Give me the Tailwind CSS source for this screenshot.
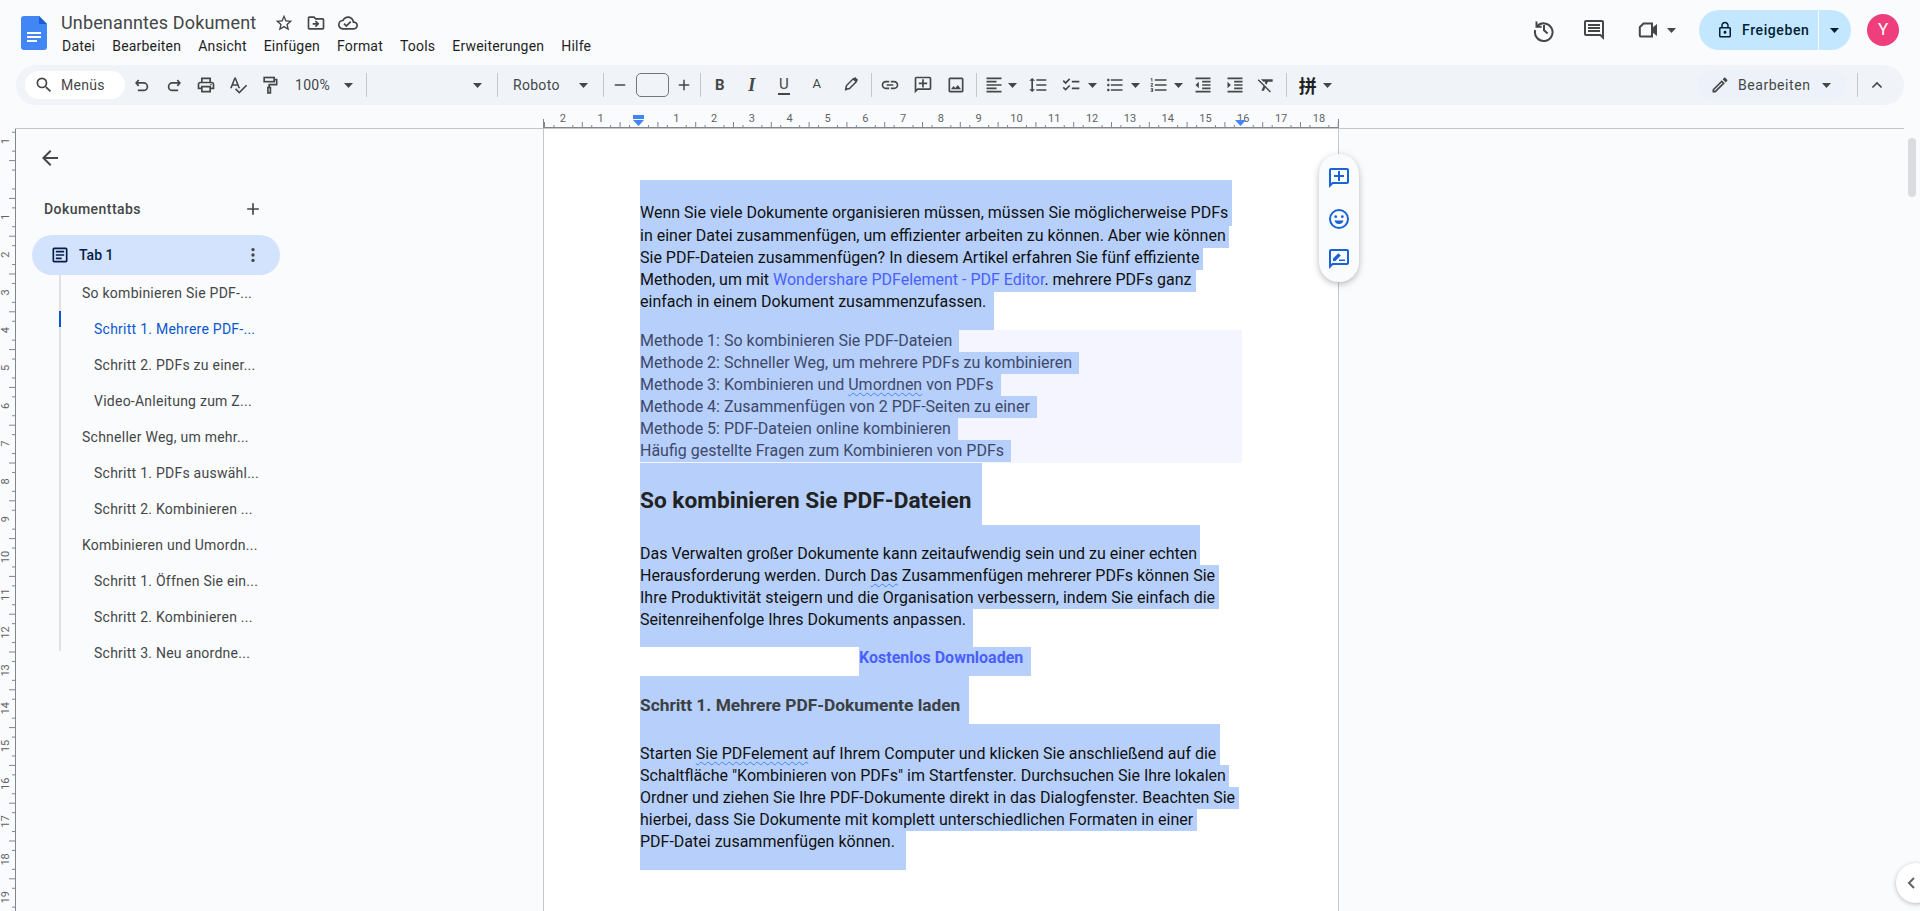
<!DOCTYPE html>
<html lang="de">
<head>
  <meta charset="UTF-8">
  <title>Unbenanntes Dokument</title>
  <script src="https://cdn.jsdelivr.net/npm/@tailwindcss/browser@4"></script>
</head>
<body class="w-[1920px] h-[911px] overflow-hidden relative bg-[#f9fbfd] font-['Roboto',sans-serif] text-[#444746]">
  <svg width="0" height="0" class="absolute">
    <symbol id="arrow" viewBox="0 0 9 5"><path d="M0 0h9L4.5 5z" fill="#444746"/></symbol>
    <symbol id="add-comment" viewBox="0 0 24 24"><path d="M20 2H4c-1.1 0-2 .9-2 2v18l4-4h14c1.1 0 2-.9 2-2V4c0-1.1-.9-2-2-2zm0 14H5.17L4 17.17V4h16v12zM13 5h-2v4H7v2h4v4h2v-4h4V9h-4z"/></symbol>
  </svg>

  <!-- Kopfzeile -->
  <header class="h-[65px] flex items-start">
    <svg class="ml-[21px] mt-[16px] shrink-0" width="26" height="34" viewBox="0 0 26 34">
      <path d="M0 3a3 3 0 0 1 3-3h15l8 8v23a3 3 0 0 1-3 3H3a3 3 0 0 1-3-3z" fill="#4285f4"/>
      <path d="M18 0l8 8h-8z" fill="#1a5fd0"/>
      <path d="M6 16h14v2H6zm0 4h14v2H6zm0 4h10v2H6z" fill="#fff"/>
    </svg>
    <div class="ml-[14px] pt-[12px]">
      <div class="flex items-center h-[22px]">
        <span class="text-[18px] leading-[22px] text-[#444746] w-[213px] tracking-[0.15px]">Unbenanntes Dokument</span>
        <svg width="20" height="20" viewBox="0 0 24 24" fill="#444746"><path d="M22 9.24l-7.19-.62L12 2 9.19 8.63 2 9.24l5.46 4.73L5.82 21 12 17.27 18.18 21l-1.63-7.03L22 9.24zM12 15.4l-3.76 2.27 1-4.28-3.32-2.88 4.38-.38L12 6.1l1.71 4.04 4.38.38-3.32 2.88 1 4.28L12 15.4z"/></svg>
        <svg class="ml-[12px]" width="20" height="20" viewBox="0 0 24 24" fill="#444746"><path d="M20 6h-8l-2-2H4c-1.1 0-1.99.9-1.99 2L2 18c0 1.1.9 2 2 2h16c1.1 0 2-.9 2-2V8c0-1.1-.9-2-2-2zm0 12H4V6h5.17l2 2H20v10zm-8.01-9l-1.41 1.41L12.16 12H8v2h4.16l-1.59 1.59L11.99 17 16 13.01 11.99 9z"/></svg>
        <svg class="ml-[12px]" width="20" height="20" viewBox="0 0 24 24" fill="#444746"><path d="M19.35 10.04C18.67 6.59 15.64 4 12 4 9.11 4 6.6 5.64 5.35 8.04 2.34 8.36 0 10.91 0 14c0 3.31 2.69 6 6 6h13c2.76 0 5-2.24 5-5 0-2.64-2.05-4.78-4.65-4.96zM19 18H6c-2.21 0-4-1.79-4-4 0-2.05 1.53-3.76 3.56-3.97l1.07-.11.5-.95C8.08 7.14 9.94 6 12 6c2.62 0 4.88 1.86 5.39 4.43l.3 1.5 1.53.11c1.56.1 2.78 1.41 2.78 2.96 0 1.65-1.35 3-3 3zm-9-3.82l-2.09-2.09L6.5 13.5 10 17l6.01-6.01-1.41-1.41z"/></svg>
      </div>
      <nav class="flex gap-[17px] mt-[3px] text-[14px] leading-[18px] text-[#1f1f1f] tracking-[0.2px] ml-px">
        <span>Datei</span><span>Bearbeiten</span><span>Ansicht</span><span>Einfügen</span><span>Format</span><span>Tools</span><span>Erweiterungen</span><span>Hilfe</span>
      </nav>
    </div>
    <div class="ml-auto flex items-center h-10 mt-[10px] pr-[21px]">
      <svg width="24" height="24" viewBox="0 0 24 24" fill="none" stroke="#444746" stroke-width="2"><path d="M4.5 3.5v5.2h5.2"/><path d="M5 8.5A8.8 8.8 0 1 1 3.2 12"/><path d="M12 7v5.2l3.6 3.4"/></svg>
      <svg class="ml-[26px]" width="24" height="24" viewBox="0 0 24 24" fill="#444746"><path d="M21.99 4c0-1.1-.89-2-1.99-2H4c-1.1 0-2 .9-2 2v12c0 1.1.9 2 2 2h14l4 4-.01-18zM20 4v13.17L18.83 16H4V4h16zM6 12h12v2H6zm0-3h12v2H6zm0-3h12v2H6z"/></svg>
      <svg class="ml-[30px]" width="24" height="24" viewBox="0 0 24 24"><path d="M7.5 5.5H16v13H4.8a1 1 0 0 1-1-1V9.2z" fill="none" stroke="#444746" stroke-width="2"/><path d="M16 10l5-4v12l-5-4z" fill="#444746"/></svg>
      <svg class="ml-[7px]" width="9" height="5"><use href="#arrow"/></svg>
      <div class="ml-[23px] flex h-10 text-[#001d35]">
        <div class="w-[119px] rounded-l-full bg-[#c2e7ff] flex items-center pl-[17px]">
          <svg width="18" height="18" viewBox="0 0 24 24" fill="#001d35"><path d="M18 8h-1V6c0-2.76-2.24-5-5-5S7 3.24 7 6v2H6c-1.1 0-2 .9-2 2v10c0 1.1.9 2 2 2h12c1.1 0 2-.9 2-2V10c0-1.1-.9-2-2-2zM9 6c0-1.66 1.34-3 3-3s3 1.34 3 3v2H9V6zm9 14H6V10h12v10zm-6-3c1.1 0 2-.9 2-2s-.9-2-2-2-2 .9-2 2 .9 2 2 2z"/></svg>
          <span class="ml-[8px] text-[14px] font-medium tracking-[0.6px]">Freigeben</span>
        </div>
        <div class="w-[32px] ml-px rounded-r-full bg-[#c2e7ff] flex items-center justify-center pr-[1px]">
          <svg width="9" height="5" viewBox="0 0 9 5"><path d="M0 0h9L4.5 5z" fill="#001d35"/></svg>
        </div>
      </div>
      <div class="ml-[16px] w-8 h-8 rounded-full bg-[#ee3f7c] text-white text-[17px] flex items-center justify-center">Y</div>
    </div>
  </header>

  <!-- Werkzeugleiste -->
  <div class="mx-[16px] h-10 rounded-[20px] bg-[#f0f4f9] flex items-center pl-[9px] text-[14px] tracking-[0.3px]">
    <div class="w-[100px] h-7 rounded-full bg-white flex items-center pl-[9px] text-[#444746]">
      <svg width="20" height="20" viewBox="0 0 24 24" fill="#444746"><path d="M15.5 14h-.79l-.28-.27A6.47 6.47 0 0 0 16 9.5 6.5 6.5 0 1 0 9.5 16c1.61 0 3.09-.59 4.23-1.57l.27.28v.79l5 4.99L20.49 19l-4.99-5zm-6 0C7.01 14 5 11.99 5 9.5S7.01 5 9.5 5 14 7.01 14 9.5 11.99 14 9.5 14z"/></svg>
      <span class="ml-[7px]">Menüs</span>
    </div>
    <div class="ml-px w-8 flex justify-center"><svg width="20" height="20" viewBox="0 0 24 24" fill="none" stroke="#444746" stroke-width="2"><path d="M8 6L5 9.5 8 13"/><path d="M5.5 9.5H14a4.5 4.5 0 0 1 0 9H7"/></svg></div>
    <div class="w-8 flex justify-center"><svg width="20" height="20" viewBox="0 0 24 24" fill="none" stroke="#444746" stroke-width="2"><path d="M16 6l3 3.5-3 3.5"/><path d="M18.5 9.5H10a4.5 4.5 0 0 0 0 9h7"/></svg></div>
    <div class="w-8 flex justify-center"><svg width="20" height="20" viewBox="0 0 24 24" fill="#444746"><path d="M19 8h-1V3H6v5H5c-1.66 0-3 1.34-3 3v6h4v4h12v-4h4v-6c0-1.66-1.34-3-3-3zM8 5h8v3H8V5zm8 14H8v-4h8v4zm2-4v-2H6v2H4v-4c0-.55.45-1 1-1h14c.55 0 1 .45 1 1v4h-2z"/><circle cx="18" cy="11.5" r="1"/></svg></div>
    <div class="w-8 flex justify-center"><svg width="20" height="20" viewBox="0 0 24 24" fill="#444746"><path d="M12.45 16h2.09L9.43 3H7.57L2.46 16h2.09l1.12-3h5.64l1.14 3zm-6.02-5L8.5 5.48 10.57 11H6.43zm15.16.59l-8.09 8.09L9.83 16l-1.41 1.41 5.09 5.09L23 13l-1.41-1.41z"/></svg></div>
    <div class="w-8 flex justify-center"><svg width="20" height="20" viewBox="0 0 24 24" fill="none" stroke="#444746" stroke-width="2"><rect x="5" y="3" width="12" height="5"/><path d="M17 5.5h3v6h-9v3"/><rect x="9.5" y="15" width="3" height="6.5"/></svg></div>
    <span class="ml-[9px] w-[49px]">100%</span>
    <svg width="9" height="5"><use href="#arrow"/></svg>
    <div class="ml-[13px] w-px h-6 bg-[#c7c7c7]"></div>
    <svg class="ml-[106px]" width="9" height="5"><use href="#arrow"/></svg>
    <div class="ml-[15px] w-px h-6 bg-[#c7c7c7]"></div>
    <span class="ml-[15px] w-[66px]">Roboto</span>
    <svg width="9" height="5"><use href="#arrow"/></svg>
    <div class="ml-[15px] w-px h-6 bg-[#c7c7c7]"></div>
    <svg class="ml-[7px]" width="18" height="18" viewBox="0 0 24 24" fill="#444746"><path d="M5 11h14v2H5z"/></svg>
    <div class="ml-[7px] w-[33px] h-6 rounded-[5px] border border-[#747775]"></div>
    <svg class="ml-[6px]" width="18" height="18" viewBox="0 0 24 24" fill="#444746"><path d="M19 13h-6v6h-2v-6H5v-2h6V5h2v6h6z"/></svg>
    <div class="ml-[7px] w-px h-6 bg-[#c7c7c7]"></div>
    <span class="ml-[3px] w-8 text-center font-bold text-[15px]">B</span>
    <span class="w-8 text-center font-['Liberation_Serif',serif] italic font-bold text-[18px]">I</span>
    <span class="w-8 flex justify-center"><span class="border-b-2 border-[#444746] leading-[17px] px-[1px] text-[15px]">U</span></span>
    <span class="w-[34px] text-center text-[13px] -mt-[3px]">A</span>
    <div class="w-[34px] flex justify-center -mt-[3px]"><svg width="18" height="18" viewBox="0 0 24 24"><path d="M5 19l1-5 9-9 4 4-9 9z" fill="none" stroke="#444746" stroke-width="2"/><path d="M15 5l2.5-2.5 4 4L19 9zM4 21l1-3 2 2z" fill="#444746"/></svg></div>
    <div class="ml-[3px] w-px h-6 bg-[#c7c7c7]"></div>
    <div class="ml-[2px] w-8 flex justify-center"><svg width="20" height="20" viewBox="0 0 24 24" fill="#444746"><path d="M3.9 12c0-1.71 1.39-3.1 3.1-3.1h4V7H7c-2.76 0-5 2.24-5 5s2.24 5 5 5h4v-1.9H7c-1.71 0-3.1-1.39-3.1-3.1zM8 13h8v-2H8v2zm9-6h-4v1.9h4c1.71 0 3.1 1.39 3.1 3.1s-1.39 3.1-3.1 3.1h-4V17h4c2.76 0 5-2.24 5-5s-2.24-5-5-5z"/></svg></div>
    <div class="ml-px w-8 flex justify-center"><svg width="20" height="20" fill="#444746"><use href="#add-comment"/></svg></div>
    <div class="ml-px w-8 flex justify-center"><svg width="20" height="20" viewBox="0 0 24 24" fill="#444746"><path d="M19 5v14H5V5h14m0-2H5c-1.1 0-2 .9-2 2v14c0 1.1.9 2 2 2h14c1.1 0 2-.9 2-2V5c0-1.1-.9-2-2-2zm-4.86 8.86l-3 3.87L9 13.14 6 17h12l-3.86-5.14z"/></svg></div>
    <div class="ml-[4px] w-px h-6 bg-[#c7c7c7]"></div>
    <svg class="ml-[7px]" width="20" height="20" viewBox="0 0 24 24" fill="#444746"><path d="M15 15H3v2h12v-2zm0-8H3v2h12V7zM3 13h18v-2H3v2zm0 8h18v-2H3v2zM3 3v2h18V3H3z"/></svg>
    <svg class="ml-[4px]" width="9" height="5"><use href="#arrow"/></svg>
    <svg class="ml-[11px]" width="20" height="20" viewBox="0 0 24 24" fill="#444746"><path d="M6 7h2.5L5 3.5 1.5 7H4v10H1.5L5 20.5 8.5 17H6V7zm4-2v2h12V5H10zm0 14h12v-2H10v2zm0-6h12v-2H10v2z"/></svg>
    <svg class="ml-[13px]" width="20" height="20" viewBox="0 0 24 24" fill="#444746"><path d="M22 7h-9v2h9V7zm0 8h-9v2h9v-2zM5.54 11L2 7.46l1.41-1.41 2.12 2.12 4.24-4.24 1.41 1.41L5.54 11zm0 8L2 15.46l1.41-1.41 2.12 2.12 4.24-4.24 1.41 1.41L5.54 19z"/></svg>
    <svg class="ml-[7px]" width="9" height="5"><use href="#arrow"/></svg>
    <svg class="ml-[8px]" width="20" height="20" viewBox="0 0 24 24" fill="#444746"><path d="M4 10.5c-.83 0-1.5.67-1.5 1.5s.67 1.5 1.5 1.5 1.5-.67 1.5-1.5-.67-1.5-1.5-1.5zm0-6c-.83 0-1.5.67-1.5 1.5S3.17 7.5 4 7.5 5.5 6.83 5.5 6 4.83 4.5 4 4.5zm0 12c-.83 0-1.5.68-1.5 1.5s.68 1.5 1.5 1.5 1.5-.68 1.5-1.5-.67-1.5-1.5-1.5zM7 19h14v-2H7v2zm0-6h14v-2H7v2zm0-8v2h14V5H7z"/></svg>
    <svg class="ml-[6px]" width="9" height="5"><use href="#arrow"/></svg>
    <svg class="ml-[9px]" width="20" height="20" viewBox="0 0 24 24" fill="#444746"><path d="M2 17h2v.5H3v1h1v.5H2v1h3v-4H2v1zm1-9h1V4H2v1h1v3zm-1 3h1.8L2 13.1v.9h3v-1H3.2L5 10.9V10H2v1zm5-6v2h14V5H7zm0 14h14v-2H7v2zm0-6h14v-2H7v2z"/></svg>
    <svg class="ml-[5px]" width="9" height="5"><use href="#arrow"/></svg>
    <svg class="ml-[10px]" width="20" height="20" viewBox="0 0 24 24" fill="#444746"><path d="M11 17h10v-2H11v2zm-8-5l4 4V8l-4 4zm0 9h18v-2H3v2zM3 3v2h18V3H3zm8 6h10V7H11v2zm0 4h10v-2H11v2z"/></svg>
    <svg class="ml-[12px]" width="20" height="20" viewBox="0 0 24 24" fill="#444746"><path d="M3 21h18v-2H3v2zM3 8v8l4-4-4-4zm8 9h10v-2H11v2zM3 3v2h18V3H3zm8 6h10V7H11v2zm0 4h10v-2H11v2z"/></svg>
    <svg class="ml-[11px]" width="20" height="20" viewBox="0 0 24 24" fill="#444746"><path d="M3.27 5L2 6.27l6.97 6.97L6.5 19h3l1.57-3.66L16.73 21 18 19.73 3.55 5.27 3.27 5zM6 5v.18L8.82 8h2.4l-.72 1.68 2.1 2.1L14.21 8H20V5H6z"/></svg>
    <div class="ml-[10px] w-px h-6 bg-[#c7c7c7]"></div>
    <span class="ml-[11px] w-5 text-center text-[18px] font-bold text-[#1f1f1f] font-['Noto_Sans_CJK_SC',sans-serif]">拼</span>
    <svg class="ml-[5px]" width="9" height="5"><use href="#arrow"/></svg>
    <div class="ml-auto w-[150px] h-[30px] rounded-full bg-[#edf2fa] flex items-center pl-[13px]">
      <svg width="20" height="20" viewBox="0 0 24 24" fill="#444746"><path d="M3 17.25V21h3.75L17.81 9.94l-3.75-3.75L3 17.25zM5.92 19H5v-.92l9.06-9.06.92.92L5.92 19zM20.71 5.63l-2.34-2.34c-.39-.39-1.02-.39-1.41 0l-1.83 1.83 3.75 3.75 1.83-1.83c.39-.39.39-1.02 0-1.41z"/></svg>
      <span class="ml-[8px] w-[84px] tracking-[0.55px]">Bearbeiten</span>
      <svg width="9" height="5"><use href="#arrow"/></svg>
    </div>
    <div class="ml-[10px] w-px h-6 bg-[#c7c7c7]"></div>
    <div class="ml-[6px] mr-[15px] w-[25px] flex justify-center"><svg width="20" height="20" viewBox="0 0 24 24" fill="none" stroke="#444746" stroke-width="2"><path d="M6.5 15l5.5-5.5 5.5 5.5"/></svg></div>
  </div>

  <!-- Lineal oben -->
  <div class="ml-[15px] mr-[16px] h-6 border-b border-[#c4c7c5]">
    <svg id="ruler-top" class="ml-[528px]" width="797" height="23"></svg>
  </div>

  <main class="flex h-[782px]">
    <svg id="ruler-left" class="shrink-0" width="16" height="782"></svg>

    <!-- Seitenleiste -->
    <aside class="w-[527px] shrink-0">
      <svg class="ml-[22px] mt-[17px]" width="24" height="24" viewBox="0 0 24 24" fill="#444746"><path d="M20 11H7.83l5.59-5.59L12 4l-8 8 8 8 1.41-1.41L7.83 13H20v-2z"/></svg>
      <div class="ml-[28px] w-[219px] mt-[29px] h-5 flex items-center justify-between text-[14px] font-medium">
        <span class="tracking-[0.45px]">Dokumenttabs</span>
        <svg width="20" height="20" viewBox="0 0 24 24" fill="#444746"><path d="M19 13h-6v6h-2v-6H5v-2h6V5h2v6h6z"/></svg>
      </div>
      <div class="ml-[16px] mt-[16px] w-[248px] h-10 rounded-full bg-[#d3e3fd] flex items-center pl-[18px] pr-[17px] text-[14px] text-[#041e49] font-medium">
        <svg width="20" height="20" viewBox="0 0 24 24" fill="#041e49"><path d="M19 3H5c-1.1 0-2 .9-2 2v14c0 1.1.9 2 2 2h14c1.1 0 2-.9 2-2V5c0-1.1-.9-2-2-2zm0 16H5V5h14v14zM7 7h10v2H7zm0 4h10v2H7zm0 4h7v2H7z"/></svg>
        <span class="ml-[9px]">Tab 1</span>
        <svg class="ml-auto" width="20" height="20" viewBox="0 0 24 24" fill="#444746"><circle cx="12" cy="5.5" r="2"/><circle cx="12" cy="12" r="2"/><circle cx="12" cy="18.5" r="2"/></svg>
      </div>
      <div class="relative ml-[43px] mt-[10px] w-[200px] h-[376px] border-l-2 border-[#e1e3e1] text-[14px] leading-9 tracking-[0.25px] whitespace-nowrap">
        <div class="absolute -left-[2px] top-[36px] w-[2px] h-4 bg-[#0b57d0]"></div>
        <div class="-mt-[10px] pl-[21px]">So kombinieren Sie PDF-...</div>
        <div class="pl-[33px] text-[#0b57d0]">Schritt 1. Mehrere PDF-...</div>
        <div class="pl-[33px]">Schritt 2. PDFs zu einer...</div>
        <div class="pl-[33px]">Video-Anleitung zum Z...</div>
        <div class="pl-[21px]">Schneller Weg, um mehr...</div>
        <div class="pl-[33px]">Schritt 1. PDFs auswähl...</div>
        <div class="pl-[33px]">Schritt 2. Kombinieren ...</div>
        <div class="pl-[21px]">Kombinieren und Umordn...</div>
        <div class="pl-[33px]">Schritt 1. Öffnen Sie ein...</div>
        <div class="pl-[33px]">Schritt 2. Kombinieren ...</div>
        <div class="pl-[33px]">Schritt 3. Neu anordne...</div>
      </div>
    </aside>

    <!-- Dokumentseite -->
    <section class="relative w-[796px] shrink-0 bg-white border-x border-[#c7c7c7] pl-[96px] pt-[51px] text-[16px] leading-[22px] text-[#111] whitespace-nowrap">
      <div class="w-[592px] h-[46px] pt-[23px] leading-[20px] bg-[#b6d0fb]">Wenn Sie viele Dokumente organisieren müssen, müssen Sie möglicherweise PDFs</div>
      <div class="w-[589px] h-[22px] leading-[20px] bg-[#b6d0fb]">in einer Datei zusammenfügen, um effizienter arbeiten zu können. Aber wie können</div>
      <div class="w-[563px] h-[22px] leading-[20px] bg-[#b6d0fb]">Sie PDF-Dateien zusammenfügen? In diesem Artikel erfahren Sie fünf effiziente</div>
      <div class="w-[556px] h-[22px] leading-[20px] bg-[#b6d0fb]">Methoden, um mit <span class="text-[#4a5fff]">Wondershare PDFelement - PDF Editor</span>. mehrere PDFs ganz</div>
      <div class="w-[354px] h-[38px] leading-[20px] bg-[#b6d0fb]">einfach in einem Dokument zusammenzufassen.</div>

      <div class="w-[602px] h-[133px] bg-[#f5f5ff] text-[#40486a]">
        <div class="w-[319px] bg-[#b6d0fb]">Methode 1: So kombinieren Sie PDF-Dateien</div>
        <div class="w-[439px] bg-[#b6d0fb]">Methode 2: Schneller Weg, um mehrere PDFs zu kombinieren</div>
        <div class="w-[361px] bg-[#b6d0fb]">Methode 3: Kombinieren und <span class="underline decoration-wavy decoration-1 decoration-[#4285f4] underline-offset-2">Umordnen</span> von PDFs</div>
        <div class="w-[397px] bg-[#b6d0fb]">Methode 4: Zusammenfügen von 2 PDF-Seiten zu einer</div>
        <div class="w-[318px] bg-[#b6d0fb]">Methode 5: PDF-Dateien online kombinieren</div>
        <div class="w-[371px] bg-[#b6d0fb]">Häufig gestellte Fragen zum Kombinieren von PDFs</div>
      </div>

      <div class="w-[342px] h-[62px] pt-[24px] bg-[#b6d0fb] text-[22.67px] leading-[28px] font-bold text-[#222]">So kombinieren Sie PDF-Dateien</div>

      <div class="w-[560px] h-[40px] pt-[18px] bg-[#b6d0fb]">Das Verwalten großer Dokumente kann zeitaufwendig sein und zu einer echten</div>
      <div class="w-[579px] bg-[#b6d0fb]">Herausforderung werden. Durch <span class="underline decoration-wavy decoration-1 decoration-[#4285f4] underline-offset-2">Das</span> Zusammenfügen mehrerer PDFs können Sie</div>
      <div class="w-[579px] bg-[#b6d0fb]">Ihre Produktivität steigern und die Organisation verbessern, indem Sie einfach die</div>
      <div class="w-[333px] h-[38px] bg-[#b6d0fb]">Seitenreihenfolge Ihres Dokuments anpassen.</div>

      <div class="ml-[219px] w-[172px] h-[29px] bg-[#b6d0fb] font-bold text-[#4a5fff]">Kostenlos Downloaden</div>

      <div class="w-[329px] h-[48px] pt-[18px] bg-[#b6d0fb] text-[17.33px] font-bold text-[#3c4043]">Schritt 1. Mehrere PDF-Dokumente laden</div>

      <div class="w-[580px] h-[41px] pt-[19px] bg-[#b6d0fb]">Starten <span class="underline decoration-wavy decoration-1 decoration-[#4285f4] underline-offset-2">Sie PDFelement</span> auf Ihrem Computer und klicken Sie anschließend auf die</div>
      <div class="w-[589px] bg-[#b6d0fb]">Schaltfläche "Kombinieren von PDFs" im Startfenster. Durchsuchen Sie Ihre lokalen</div>
      <div class="w-[599px] bg-[#b6d0fb]">Ordner und ziehen Sie Ihre PDF-Dokumente direkt in das Dialogfenster. Beachten Sie</div>
      <div class="w-[557px] bg-[#b6d0fb]">hierbei, dass Sie Dokumente mit komplett unterschiedlichen Formaten in einer</div>
      <div class="w-[266px] h-[39px] bg-[#b6d0fb]">PDF-Datei zusammenfügen können.</div>

      <!-- schwebende Kommentarleiste -->
      <div class="absolute left-[775px] top-[25px] w-10 h-[128px] rounded-full bg-[#f9fbfd] shadow-[0_2px_6px_rgba(60,64,67,0.35)] flex flex-col items-center">
        <svg class="mt-[12px]" width="24" height="24" fill="#1a62d6"><use href="#add-comment"/></svg>
        <svg class="mt-[17px]" width="24" height="24" viewBox="0 0 24 24"><circle cx="12" cy="12" r="9" fill="none" stroke="#1a62d6" stroke-width="2"/><circle cx="8.7" cy="9.7" r="1.4" fill="#1a62d6"/><circle cx="15.3" cy="9.7" r="1.4" fill="#1a62d6"/><path d="M7.5 13.5h9c-.6 2.4-2.3 3.6-4.5 3.6s-3.9-1.2-4.5-3.6z" fill="#1a62d6"/></svg>
        <svg class="mt-[16px]" width="24" height="24" viewBox="0 0 24 24" fill="#1a62d6"><path d="M20 2H4c-1.1 0-2 .9-2 2v18l4-4h14c1.1 0 2-.9 2-2V4c0-1.1-.9-2-2-2zm0 14H5.17L4 17.17V4h16v12z"/><path d="M6 14v-2.4l5.4-5.4 2.4 2.4L8.4 14zM12 12.5h6V14h-6z"/></svg>
      </div>
    </section>
  </main>

  <!-- Scrollleiste und seitlicher Knopf -->
  <div class="absolute left-[1908px] top-[138px] w-2 h-[59px] rounded-full bg-[#dadce0]"></div>
  <div class="absolute left-[1896px] top-[863px] w-10 h-10 rounded-full bg-white shadow-[0_1px_4px_rgba(60,64,67,0.35)] flex items-center pl-[8px]">
    <svg width="14" height="14" viewBox="0 0 14 14" fill="none" stroke="#5f6368" stroke-width="2"><path d="M10 2L5 7l5 5"/></svg>
  </div>

  <script>
    // Lineale zeichnen
    const NS = 'http://www.w3.org/2000/svg';
    const CM = 37.8;
    function add(svg, tag, attrs, text) {
      const el = document.createElementNS(NS, tag);
      for (const k in attrs) el.setAttribute(k, attrs[k]);
      if (text) el.textContent = text;
      svg.appendChild(el);
    }

    const rulerTop = document.getElementById('ruler-top');
    const left0 = 95.5;
    for (let i = -10; i <= 76; i++) {
      const x = left0 + i * CM / 4;
      if (x < 0 || x > 796) continue;
      if (i % 4 === 0) {
        if (i !== 0) add(rulerTop, 'text', { x: x, y: 17, 'text-anchor': 'middle', 'font-size': 11, 'font-family': 'Roboto', fill: '#5f6368' }, String(Math.abs(i / 4)));
      } else {
        const len = i % 2 === 0 ? 6 : 3;
        add(rulerTop, 'rect', { x: x, y: 23 - len, width: 1, height: len, fill: '#80868b' });
      }
    }
    add(rulerTop, 'rect', { x: 0, y: 22, width: 796, height: 1, fill: '#80868b' });
    add(rulerTop, 'rect', { x: 0, y: 14, width: 1, height: 9, fill: '#80868b' });
    add(rulerTop, 'rect', { x: 795, y: 14, width: 1, height: 9, fill: '#80868b' });
    // Einzugsmarken
    add(rulerTop, 'rect', { x: 90, y: 10, width: 11, height: 4, fill: '#4285f4' });
    add(rulerTop, 'path', { d: 'M90 15h11l-5.5 6z', fill: '#4285f4' });
    add(rulerTop, 'path', { d: 'M692 15h11l-5.5 6z', fill: '#4285f4' });

    const rulerLeft = document.getElementById('ruler-left');
    add(rulerLeft, 'rect', { x: 15, y: 0, width: 1, height: 782, fill: '#80868b' });
    const top0 = 50;
    for (let i = -5; i <= 78; i++) {
      const y = top0 + i * CM / 4;
      if (y < 0 || y > 782) continue;
      if (i % 4 === 0) {
        if (i !== 0) add(rulerLeft, 'text', { x: 0, y: 0, transform: `translate(9 ${y}) rotate(-90)`, 'text-anchor': 'middle', 'font-size': 11, 'font-family': 'Roboto', fill: '#5f6368' }, String(Math.abs(i / 4)));
      } else {
        const len = i % 2 === 0 ? 6 : 3;
        add(rulerLeft, 'rect', { x: 15 - len, y: y, width: len, height: 1, fill: '#80868b' });
      }
    }
  </script>
</body>
</html>
